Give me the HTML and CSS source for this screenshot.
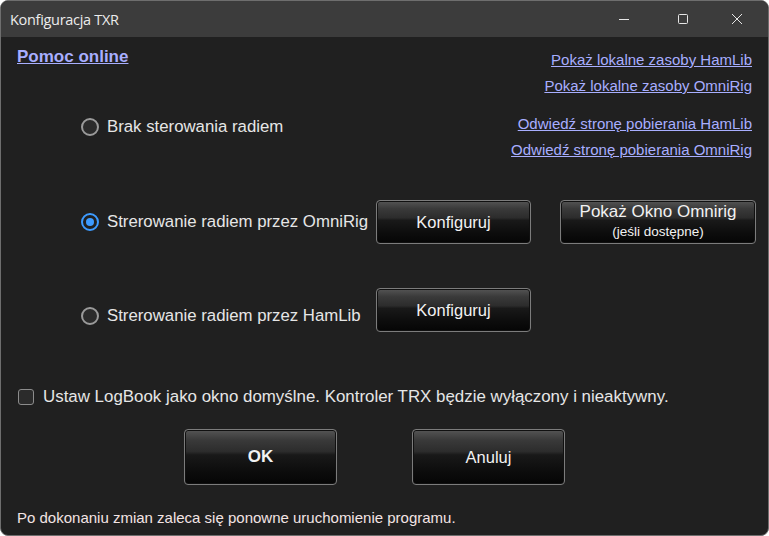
FILE: index.html
```html
<!DOCTYPE html>
<html>
<head>
    <title>Konfiguracja TXR</title>
    <link rel="stylesheet" href="styles.css">
</head>
<body>
    <div class="window">
        <div class="titlebar">
            <span class="title">Konfiguracja TXR</span>
            <div class="controls">
                <span class="ctrl">
                    <svg width="12" height="12" viewBox="0 0 12 12"><path d="M1 6.5h10" stroke="#e6e6e6" stroke-width="1"/></svg>
                </span>
                <span class="ctrl">
                    <svg width="12" height="12" viewBox="0 0 12 12"><rect x="1.5" y="1.5" width="9" height="9" rx="1" fill="none" stroke="#e6e6e6" stroke-width="1"/></svg>
                </span>
                <span class="ctrl">
                    <svg width="12" height="12" viewBox="0 0 12 12"><path d="M1 1L11 11M11 1L1 11" stroke="#e6e6e6" stroke-width="1"/></svg>
                </span>
            </div>
        </div>

        <div class="content">
            <div class="top">
                <div class="top-left">
                    <a href="#" class="help-link">Pomoc online</a>
                    <label class="radio-row first">
                        <span class="radio"></span>
                        <span class="radio-text">Brak sterowania radiem</span>
                    </label>
                </div>
                <div class="top-right">
                    <a href="#" class="link">Pokaż lokalne zasoby HamLib</a>
                    <a href="#" class="link">Pokaż lokalne zasoby OmniRig</a>
                    <a href="#" class="link group">Odwiedź stronę pobierania HamLib</a>
                    <a href="#" class="link">Odwiedź stronę pobierania OmniRig</a>
                </div>
            </div>

            <div class="option-row omni">
                <label class="radio-row">
                    <span class="radio checked"></span>
                    <span class="radio-text">Strerowanie radiem przez OmniRig</span>
                </label>
                <button class="btn small">Konfiguruj</button>
                <button class="btn wide">
                    <span class="btn-main">Pokaż Okno Omnirig</span>
                    <span class="btn-sub">(jeśli dostępne)</span>
                </button>
            </div>

            <div class="option-row hamlib">
                <label class="radio-row lower">
                    <span class="radio"></span>
                    <span class="radio-text">Strerowanie radiem przez HamLib</span>
                </label>
                <button class="btn small">Konfiguruj</button>
            </div>

            <label class="check-row">
                <span class="checkbox"></span>
                <span>Ustaw LogBook jako okno domyślne. Kontroler TRX będzie wyłączony i nieaktywny.</span>
            </label>

            <div class="actions">
                <button class="btn big ok">OK</button>
                <button class="btn big">Anuluj</button>
            </div>

            <p class="note">Po dokonaniu zmian zaleca się ponowne uruchomienie programu.</p>
        </div>
    </div>
</body>
</html>
```

FILE: styles.css
```css
body {
    margin: 0;
    background-color: #ffffff;
    font-family: "Liberation Sans", Arial, sans-serif;
}

.window {
    width: 767px;
    height: 534px;
    border: 1px solid #6e6e6e;
    border-radius: 8px;
    overflow: hidden;
    background-color: #202020;
    display: flex;
    flex-direction: column;
}

.titlebar {
    height: 36px;
    background-color: #3c3c3c;
    display: flex;
    align-items: center;
    justify-content: space-between;
    flex-shrink: 0;
}

.title {
    font-family: "Open Sans", sans-serif;
    font-size: 14.5px;
    color: #ececec;
    padding-left: 9px;
    letter-spacing: -0.3px;
}

.controls {
    display: flex;
    height: 100%;
}

.ctrl {
    width: 59px;
    display: flex;
    align-items: center;
    justify-content: center;
}

.ctrl:last-child {
    width: 50px;
    padding-right: 6px;
}

.content {
    flex: 1;
    padding: 0 16px;
    display: flex;
    flex-direction: column;
    color: #e6e6e6;
}

.top {
    display: flex;
    justify-content: space-between;
}

.top-left {
    display: flex;
    flex-direction: column;
    align-items: flex-start;
}

.help-link {
    color: #a8aeff;
    font-weight: bold;
    font-size: 17px;
    line-height: 20px;
    margin-top: 10px;
}

.top-right {
    display: flex;
    flex-direction: column;
    align-items: flex-end;
    padding-top: 10px;
}

.link {
    color: #a8aeff;
    font-size: 15px;
    line-height: 26px;
}

.link.group {
    margin-top: 12px;
}

.radio-row {
    display: flex;
    align-items: center;
    gap: 8px;
    font-size: 16.8px;
    line-height: 20px;
    padding-left: 64px;
}

.radio-row.first {
    margin-top: 50px;
}

.radio {
    width: 14px;
    height: 14px;
    border: 2px solid #9a9a9a;
    border-radius: 50%;
    background-color: #2b2b2b;
    box-sizing: content-box;
    display: flex;
    align-items: center;
    justify-content: center;
    flex-shrink: 0;
}

.radio.checked {
    border-color: #3d9bff;
    background-color: #202020;
}

.radio.checked::after {
    content: "";
    width: 8px;
    height: 8px;
    border-radius: 50%;
    background-color: #3d9bff;
}

.option-row {
    display: flex;
    align-items: center;
}

.option-row .radio-row {
    flex: 0 0 359px;
    min-width: 0;
    box-sizing: border-box;
    white-space: nowrap;
}

.option-row.omni {
    margin-top: 37px;
}

.option-row.hamlib {
    margin-top: 44px;
    align-items: flex-start;
}

.radio-row.lower {
    margin-top: 18px;
}

.btn {
    font-family: "Liberation Sans", Arial, sans-serif;
    color: #f2f2f2;
    font-size: 16.5px;
    border: 1px solid #7c7c7c;
    border-radius: 4px;
    background: linear-gradient(to bottom, #555555 0%, #3a3a3a 18%, #2c2c2c 40%, #191919 46%, #0d0d0d 75%, #050505 100%);
    box-shadow: inset 0 0 0 1px #101010;
    cursor: pointer;
    padding: 0;
    flex-shrink: 0;
}

.btn.small {
    width: 155px;
    height: 44px;
}

.btn.wide {
    width: 196px;
    height: 44px;
    margin-left: 29px;
    display: flex;
    flex-direction: column;
    align-items: center;
    justify-content: center;
}

.btn-main {
    font-size: 17px;
    margin-top: -3px;
}

.btn-sub {
    font-size: 13.5px;
    margin-top: 2px;
}

.check-row {
    display: flex;
    align-items: center;
    gap: 9px;
    font-size: 16.9px;
    line-height: 20px;
    margin-top: 55px;
    padding-left: 1px;
}

.checkbox {
    width: 14px;
    height: 14px;
    border: 1px solid #8c8c8c;
    border-radius: 3px;
    background-color: #2b2b2b;
    flex-shrink: 0;
}

.actions {
    display: flex;
    gap: 75px;
    padding-left: 167px;
    margin-top: 22px;
}

.btn.big {
    width: 153px;
    height: 56px;
}

.btn.ok {
    font-weight: bold;
    font-size: 17px;
}

.note {
    font-size: 15px;
    line-height: 18px;
    color: #f3e4e4;
    margin: 24px 0 0 0;
}
```
